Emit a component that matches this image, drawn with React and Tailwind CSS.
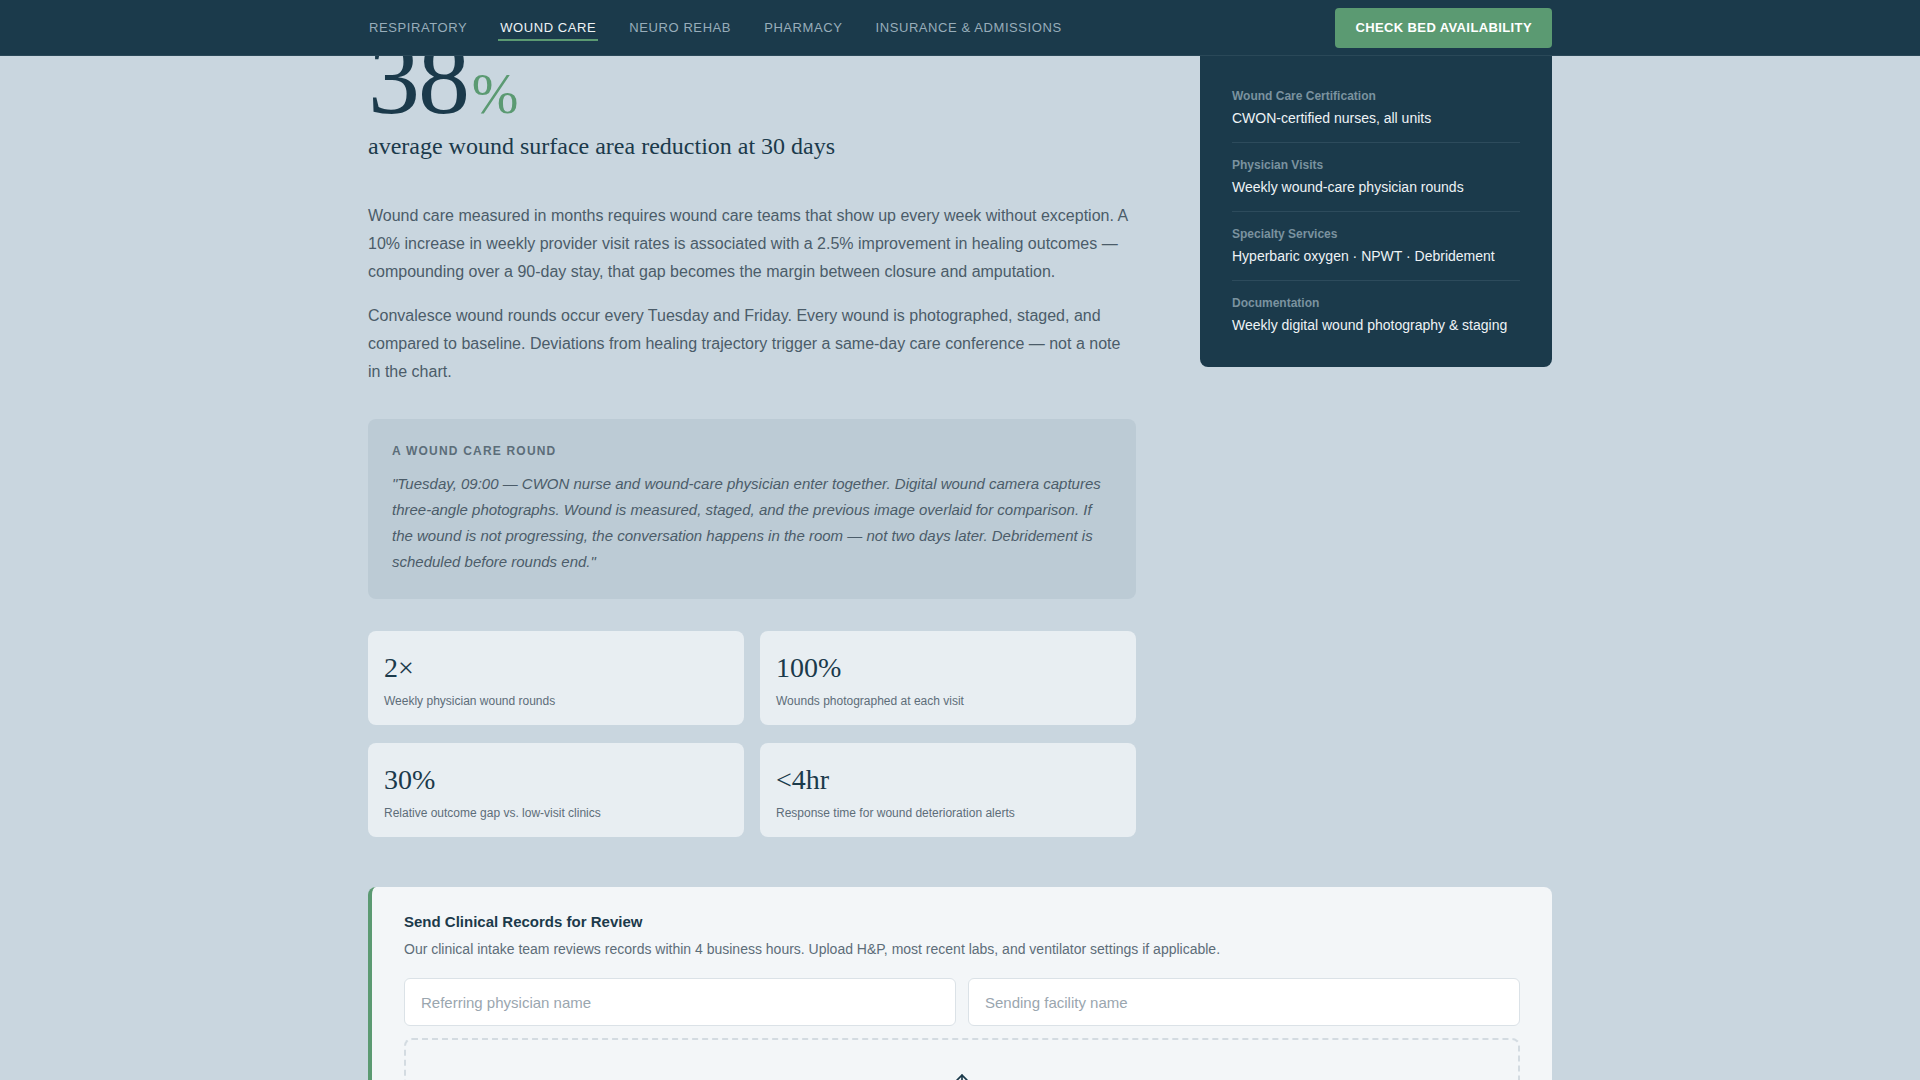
import React from "react";

const navLinks = [
  { label: "Respiratory", active: false },
  { label: "Wound Care", active: true },
  { label: "Neuro Rehab", active: false },
  { label: "Pharmacy", active: false },
  { label: "Insurance & Admissions", active: false },
];

const facts = [
  { label: "Wound Care Certification", value: "CWON-certified nurses, all units" },
  { label: "Physician Visits", value: "Weekly wound-care physician rounds" },
  { label: "Specialty Services", value: "Hyperbaric oxygen · NPWT · Debridement" },
  { label: "Documentation", value: "Weekly digital wound photography & staging" },
];

const stats = [
  { value: "2×", label: "Weekly physician wound rounds" },
  { value: "100%", label: "Wounds photographed at each visit" },
  { value: "30%", label: "Relative outcome gap vs. low-visit clinics" },
  { value: "<4hr", label: "Response time for wound deterioration alerts" },
];

const sans = "font-['Liberation_Sans',Arial,sans-serif]";
const serif = "font-['Liberation_Serif','Times_New_Roman',serif]";

function TopNav() {
  return (
    <header className="h-14 shrink-0 bg-[#1b3a4b] border-b border-[#2a4858]">
      <div className="mx-auto w-[1184px] h-full flex items-center justify-between">
        <nav className="flex items-center gap-[33px] pl-px">
          {navLinks.map((l) => (
            <a
              key={l.label}
              href="#"
              className={
                l.active
                  ? "pt-[5px] pb-[3px] border-b-2 border-[#5b9a72] text-[13px] leading-4 uppercase tracking-[0.045em] text-[#eef3f6] -mx-0.5 px-0.5"
                  : "pt-[5px] pb-[3px] border-b-2 border-transparent text-[13px] leading-4 uppercase tracking-[0.045em] text-[#98adba]"
              }
            >
              {l.label}
            </a>
          ))}
        </nav>
        <button className="h-10 px-5 rounded-[4px] bg-[#5b9a72] text-white text-[13px] font-bold uppercase tracking-[0.03em]">
          Check Bed Availability
        </button>
      </div>
    </header>
  );
}

function Sidebar() {
  return (
    <aside className="self-start bg-[#1b3a4b] rounded-b-lg px-8 pt-[18px] pb-[18px]">
      {facts.map((f, i) => (
        <div
          key={f.label}
          className={
            i < facts.length - 1
              ? "py-[14px] border-b border-[#2d4b5c]"
              : "py-[14px]"
          }
        >
          <div className="text-xs leading-4 font-bold text-[#7a929f]">{f.label}</div>
          <div className="mt-1 text-sm leading-5 text-[#eef3f6]">{f.value}</div>
        </div>
      ))}
    </aside>
  );
}

function StatCard({ value, label }) {
  return (
    <div className="rounded-lg bg-[#e8eef2] px-4 pt-[19px] pb-4">
      <div className={`${serif} text-[28px] leading-9 text-[#1b3a4b]`}>{value}</div>
      <div className="mt-[7px] text-xs leading-4 text-[#5d6d79]">{label}</div>
    </div>
  );
}

function UploadArrow() {
  return (
    <svg width="20" height="20" viewBox="0 0 24 24" fill="none" stroke="#1b3a4b" strokeWidth="2" strokeLinecap="round" strokeLinejoin="round">
      <path d="M12 19V5" />
      <path d="M6 11l6-6 6 6" />
    </svg>
  );
}

function ReferralForm() {
  return (
    <section className="mt-[50px] rounded-lg bg-[#f3f6f8] border-l-4 border-[#5b9a72] pl-8 pr-8 pt-6 pb-10">
      <h3 className="text-[15px] leading-[22px] font-bold text-[#1b3a4b]">Send Clinical Records for Review</h3>
      <p className="mt-1.5 text-sm leading-5 text-[#5d6d79]">
        Our clinical intake team reviews records within 4 business hours. Upload H&amp;P, most recent labs, and ventilator settings if applicable.
      </p>
      <div className="mt-[19px] grid grid-cols-2 gap-3">
        <input
          className="h-12 rounded-md border border-[#dbe2e7] bg-white px-4 text-[15px] text-[#1b3a4b] placeholder:text-[#9aa6af] outline-none"
          placeholder="Referring physician name"
        />
        <input
          className="h-12 rounded-md border border-[#dbe2e7] bg-white px-4 text-[15px] text-[#1b3a4b] placeholder:text-[#9aa6af] outline-none"
          placeholder="Sending facility name"
        />
      </div>
      <div className="mt-3 rounded-lg border-2 border-dashed border-[#d3dbe1] flex flex-col items-center pt-[31px] pb-8">
        <UploadArrow />
        <div className="mt-2 text-sm text-[#5d6d79]">Drop clinical records here or click to browse</div>
      </div>
    </section>
  );
}

export default function App() {
  return (
    <div className={`${sans} h-screen overflow-hidden flex flex-col bg-[#c9d6df]`}>
      <TopNav />
      <div className="flex-1 overflow-hidden">
        <div className="mx-auto w-[1184px]">
          <div className="grid grid-cols-[768px_352px] gap-16">
            <main className="-mt-[30px]">
              <div className={`${serif} leading-none text-[#1b3a4b]`}>
                <span className="text-[104px] tracking-[-0.02em]">38</span>
                <span className="ml-1 text-[56px] text-[#5b9a72]">%</span>
              </div>
              <p className={`${serif} text-2xl leading-8 text-[#1b3a4b]`}>
                average wound surface area reduction at 30 days
              </p>
              <p className="mt-[40px] text-base leading-7 text-[#4b5c69]">
                Wound care measured in months requires wound care teams that show up every week without exception. A 10% increase in weekly provider visit rates is associated with a 2.5% improvement in healing outcomes — compounding over a 90-day stay, that gap becomes the margin between closure and amputation.
              </p>
              <p className="mt-4 text-base leading-7 text-[#4b5c69]">
                Convalesce wound rounds occur every Tuesday and Friday. Every wound is photographed, staged, and compared to baseline. Deviations from healing trajectory trigger a same-day care conference — not a note in the chart.
              </p>
              <div className="mt-[33px] rounded-lg bg-[#bccbd5] p-6">
                <div className="text-xs leading-4 font-bold uppercase tracking-[0.1em] text-[#5b6d79]">A Wound Care Round</div>
                <p className="mt-3 text-[15px] leading-[26px] italic text-[#4b5c69]">
                  "Tuesday, 09:00 — CWON nurse and wound-care physician enter together. Digital wound camera captures three-angle photographs. Wound is measured, staged, and the previous image overlaid for comparison. If the wound is not progressing, the conversation happens in the room — not two days later. Debridement is scheduled before rounds end."
                </p>
              </div>
              <div className="mt-8 grid grid-cols-2 gap-x-4 gap-y-[18px]">
                {stats.map((s) => (
                  <StatCard key={s.label} {...s} />
                ))}
              </div>
            </main>
            <Sidebar />
          </div>
          <ReferralForm />
        </div>
      </div>
    </div>
  );
}
